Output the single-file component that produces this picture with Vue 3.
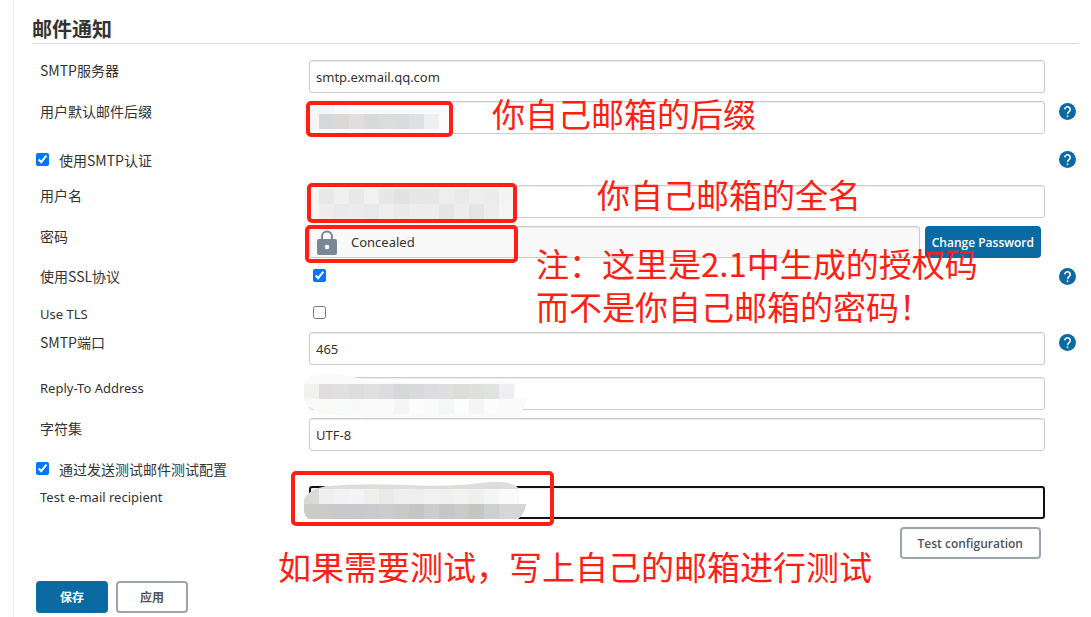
<script setup>
import { ref } from 'vue'

const server = ref('smtp.exmail.qq.com')
const suffix = ref('')
const useAuth = ref(true)
const username = ref('')
const useSsl = ref(true)
const useTls = ref(false)
const port = ref('465')
const replyTo = ref('')
const charset = ref('UTF-8')
const testMail = ref(true)
const recipient = ref('')

const suffixTiles = [
  ['#f7f7f7', '#f4f5f4', '#f9f9f9', '#fafafa', '#fafafa', '#fafafa', '#fafafa', '#fafafa', '#fafafa'],
  ['#f6f5f2', '#d5d8db', '#dad9d7', '#e1dee0', '#d8dad9', '#dadddc', '#d9dcda', '#dfe0e3', '#efefef'],
]
const userTiles = [
  ['#f6f6f6', '#e8e8e8', '#f0f0f1', '#e8e8e8', '#f1f1f2', '#e7e7e7', '#e2e2e2', '#e6e6e6', '#e7e7e7', '#eeeeee', '#e9e9e9', '#eeeeee', '#ececec', '#f4f4f5'],
  ['#f7f7f4', '#efedeb', '#e8eaed', '#eceaec', '#e8e9ed', '#eeeeee', '#eaeaea', '#ededed', '#ededed', '#e5e5e5', '#ededed', '#e4e4e4', '#eceeee', '#f5f5f5'],
]
const replyTiles = [
  ['#f1f1ef', '#dfddde', '#e0e0e0', '#dcdddc', '#e0e0e0', '#dcdcdf', '#d6d8d8', '#dadada', '#dddde0', '#dfdfe0', '#dcdcda', '#dfdfdc', '#e1e3e2', '#efeff2'],
  ['#fafafa', '#fafbf9', '#f8fbfa', '#f9f9f9', '#fafafa', '#fafafa', '#f5f5f5', '#fcfcfc', '#fafafa', '#f5f7f7', '#fcfdfd', '#f5f5f6', '#fcfcfc', '#fafafa'],
]
const testTiles = [
  ['#d9d9d8', '#efefef', '#f2f2f2', '#f4f4f4', '#efefee', '#e8e9e8', '#efefef', '#eeeeee', '#f1f1f1', '#f0f0f0', '#f2f2f0', '#efefef', '#f5f5f5'],
  ['#cbcbca', '#cccac8', '#c8c9cd', '#cac8ca', '#c9cacd', '#cbcccc', '#cac9c8', '#c4c5c5', '#cccdce', '#c5c6c6', '#cacaca', '#c5c5c4', '#ccd0d0', '#d6d6d6'],
]
</script>

<template>
  <main class="panel">
    <h1 class="title">邮件通知</h1>
    <form class="form" @submit.prevent>
      <div class="row">
        <label for="server">SMTP服务器</label>
        <div class="field"><input id="server" v-model="server" class="text" type="text" /></div>
      </div>

      <div class="row">
        <label for="suffix">用户默认邮件后缀</label>
        <div class="field">
          <input id="suffix" v-model="suffix" class="text" type="text" />
          <svg class="mosaic" width="165" height="45" aria-hidden="true">
            <path d="M15 5H140Q150 8 148 34Q146 44 120 44Q70 43 50 38H8V8Z" fill="#fbfbfb" />
            <g v-for="(line, r) in suffixTiles" :key="r">
              <rect v-for="(c, i) in line" :key="i" :x="i * 15" :y="r * 15" width="15" height="15" :fill="c" />
            </g>
          </svg>
          <span class="frame frame-suffix"></span>
          <p class="note note-suffix">你自己邮箱的后缀</p>
        </div>
        <a class="help" href="#" aria-label="帮助: 用户默认邮件后缀"><svg viewBox="0 0 24 24"><use href="#help-mark" /></svg></a>
      </div>

      <div class="row row-auth">
        <div class="check"><input id="auth" v-model="useAuth" type="checkbox" /><label for="auth">使用SMTP认证</label></div>
        <a class="help" href="#" aria-label="帮助: 使用SMTP认证"><svg viewBox="0 0 24 24"><use href="#help-mark" /></svg></a>
      </div>

      <div class="row">
        <label for="username">用户名</label>
        <div class="field">
          <input id="username" v-model="username" class="text" type="text" />
          <svg class="mosaic mosaic-user" width="210" height="30" aria-hidden="true">
            <g v-for="(line, r) in userTiles" :key="r">
              <rect v-for="(c, i) in line" :key="i" :x="i * 15" :y="r * 15" width="15" height="15" :fill="c" />
            </g>
          </svg>
          <span class="frame frame-user"></span>
          <p class="note note-user">你自己邮箱的全名</p>
        </div>
      </div>

      <div class="row row-password">
        <label for="password">密码</label>
        <div class="field secret">
          <input id="password" class="text concealed" type="text" value="Concealed" readonly />
          <svg class="lock" viewBox="0 0 20 26" aria-hidden="true">
            <path d="M5 10V6.500a5 5 0 0 1 10 0V10" fill="none" stroke="#798796" stroke-width="2" />
            <rect y="9" width="20" height="16" rx="2" fill="#798796" />
            <circle cx="10" cy="17" r="2.300" fill="#fff" />
          </svg>
          <button type="button" class="btn primary">Change Password</button>
          <span class="frame frame-password"></span>
          <p class="note note-password">注：这里是2.1中生成的授权码<br />而不是你自己邮箱的密码！</p>
        </div>
      </div>

      <div class="row row-ssl">
        <label for="ssl">使用SSL协议</label>
        <div class="field"><input id="ssl" v-model="useSsl" type="checkbox" /></div>
        <a class="help" href="#" aria-label="帮助: 使用SSL协议"><svg viewBox="0 0 24 24"><use href="#help-mark" /></svg></a>
      </div>

      <div class="row row-tls">
        <label class="latin" for="tls">Use TLS</label>
        <div class="field"><input id="tls" v-model="useTls" type="checkbox" /></div>
      </div>

      <div class="row row-port">
        <label for="port">SMTP端口</label>
        <div class="field"><input id="port" v-model="port" class="text" type="text" /></div>
        <a class="help" href="#" aria-label="帮助: SMTP端口"><svg viewBox="0 0 24 24"><use href="#help-mark" /></svg></a>
      </div>

      <div class="row">
        <label class="latin" for="reply">Reply-To Address</label>
        <div class="field">
          <input id="reply" v-model="replyTo" class="text" type="text" />
          <svg class="mosaic mosaic-reply" width="225" height="55" aria-hidden="true">
            <path d="M0 14Q4 4 20 4Q45 4 60 10Q110 14 170 14Q206 8 213 15L210 29H223Q220 44 208 48Q160 59 90 53Q70 51 55 46Q0 46 0 27Z" fill="#fafafa" />
            <g v-for="(line, r) in replyTiles" :key="r">
              <rect v-for="(c, i) in line.slice(r ? 1 : 0)" :key="i" :x="(i + r) * 15" :y="14 + r * 15" width="15" height="15" :fill="c" />
            </g>
          </svg>
        </div>
      </div>

      <div class="row">
        <label for="charset">字符集</label>
        <div class="field"><input id="charset" v-model="charset" class="text" type="text" /></div>
      </div>

      <div class="row row-test">
        <div class="check"><input id="test" v-model="testMail" type="checkbox" /><label for="test">通过发送测试邮件测试配置</label></div>
      </div>

      <div class="row">
        <label class="latin" for="recipient">Test e-mail recipient</label>
        <div class="field">
          <input id="recipient" v-model="recipient" class="text active" type="text" />
          <svg class="mosaic mosaic-test" width="225" height="38" aria-hidden="true">
            <defs>
              <clipPath id="smudge"><path d="M0 17Q6 7 22 4Q60 1 100 3Q150 5 175 1Q208 -3 215 7V22H222Q221 32 214 37H5Q0 34 0 27Z" /></clipPath>
            </defs>
            <g clip-path="url(#smudge)">
              <rect width="215" height="38" fill="#dddddc" />
              <rect x="195" y="7" width="20" height="15" fill="#fafafa" />
              <g v-for="(line, r) in testTiles" :key="r">
                <rect v-for="(c, i) in line" :key="i" :x="i * 15" :y="7 + r * 15" width="15" height="15" :fill="c" />
              </g>
              <rect x="210" y="22" width="15" height="15" fill="#d6d6d6" />
            </g>
          </svg>
          <span class="frame frame-test"></span>
          <p class="note note-test">如果需要测试，写上自己的邮箱进行测试</p>
        </div>
      </div>

      <div class="test-action"><button type="button" class="btn outline">Test configuration</button></div>

      <div class="actions">
        <button type="submit" class="btn primary wide">保存</button>
        <button type="button" class="btn outline wide">应用</button>
      </div>
    </form>

    <svg class="symbols" aria-hidden="true">
      <symbol id="help-mark" viewBox="0 0 24 24">
        <circle cx="12" cy="12" r="12" fill="#0b6aa2" />
        <path d="M8.200 9a3.800 3.800 0 1 1 6.300 2.900Q12 14 12 16" fill="none" stroke="#fff" stroke-width="2.200" />
        <rect x="10.900" y="17.600" width="2.200" height="2.400" fill="#fff" />
      </symbol>
    </svg>
  </main>
</template>

<style>
body {
  background: #fff;
}
</style>

<style scoped>
* {
  box-sizing: border-box;
}
.panel {
  min-height: 100vh;
  margin-left: 13px;
  padding: 16px 12px 4px 18px;
  border-left: 1px solid #e9e9ea;
  color: #333;
  font: 14px/20px "Noto Sans CJK SC", sans-serif;
}
.title {
  margin: 0 0 16px;
  height: 28px;
  border-bottom: 1px solid #ddd;
  font-size: 20px;
  line-height: 26px;
  font-weight: 700;
}
.row {
  display: grid;
  grid-template-columns: 269px minmax(0, 1fr) 34px;
  align-items: start;
  padding-left: 8px;
  margin-bottom: 8px;
}
.latin {
  font-family: "Noto Sans", sans-serif;
  font-size: 13px;
  line-height: 22px;
}
.field {
  position: relative;
  display: flex;
}
.text {
  flex: 1;
  min-width: 0;
  height: 33px;
  padding: 0 6px;
  border: 1px solid #ccc;
  border-radius: 3px;
  background: #fff;
  box-shadow: inset 0 1px 1px rgba(0, 0, 0, 0.08);
  color: #333;
  font: 13px "Noto Sans", sans-serif;
  outline: none;
}
.active {
  border: 2px solid #111;
}
input[type="checkbox"] {
  width: 13px;
  height: 13px;
  margin: 3px 4px;
  flex: none;
}
.check {
  grid-column: 1 / 3;
  display: flex;
  margin-left: -8px;
}
.check label {
  margin-left: 6px;
}
.row-auth {
  padding-top: 8px;
  margin-bottom: 15px;
}
.secret {
  padding-right: 4px;
  gap: 5px;
}
.concealed {
  height: 32px;
  padding-left: 41px;
  background: #f9f9f9;
}
.lock {
  position: absolute;
  left: 8px;
  top: 4px;
  width: 20px;
  height: 26px;
}
.row-ssl {
  margin-bottom: 17px;
}
.row-tls {
  margin-bottom: 7px;
}
.row-port {
  margin-bottom: 12px;
}
.row-test {
  margin-bottom: 7px;
}
.help {
  justify-self: end;
  width: 17px;
  height: 17px;
  margin: 2px 3px 0 0;
}
.row-auth .help {
  margin-top: 1px;
}
.help svg {
  display: block;
  width: 17px;
  height: 17px;
}
.btn {
  height: 32px;
  border: 2px solid #0b6aa2;
  border-radius: 4px;
  padding: 0 5px;
  font: 600 12px "Open Sans", "Noto Sans CJK SC", sans-serif;
  white-space: nowrap;
}
.primary {
  background: #0b6aa2;
  color: #fff;
}
.outline {
  padding: 0 16px;
  border-color: #9aa5b0;
  background: #fff;
  color: #4d545d;
}
.wide {
  width: 72px;
}
.test-action {
  display: flex;
  justify-content: flex-end;
  padding-right: 38px;
}
.actions {
  display: flex;
  gap: 8px;
  margin-top: 22px;
  padding-left: 4px;
}
.mosaic {
  position: absolute;
  left: -5px;
  top: -2px;
  pointer-events: none;
}
.mosaic-user {
  top: 4px;
}
.mosaic-reply {
  top: -7px;
}
.mosaic-test {
  top: -4px;
}
.frame {
  position: absolute;
  border: 4px solid #ff2013;
  border-radius: 5px;
  pointer-events: none;
}
.frame-suffix {
  left: -3px;
  top: 0;
  width: 147px;
  height: 36px;
}
.frame-user {
  left: -2px;
  top: -2px;
  width: 210px;
  height: 40px;
}
.frame-password {
  left: -4px;
  top: -1px;
  width: 213px;
  height: 38px;
}
.frame-test {
  left: -18px;
  top: -15px;
  width: 263px;
  height: 55px;
}
.note {
  position: absolute;
  z-index: 1;
  margin: 0;
  color: #ff2013;
  font-size: 33px;
  line-height: 43px;
  font-weight: 400;
  white-space: nowrap;
  pointer-events: none;
}
.note-suffix {
  left: 183px;
  top: -9px;
}
.note-user {
  left: 288px;
  top: -12px;
}
.note-password {
  left: 227px;
  top: 16px;
}
.note-test {
  left: -31px;
  top: 59px;
}
.symbols {
  position: absolute;
  width: 0;
  height: 0;
}
</style>
